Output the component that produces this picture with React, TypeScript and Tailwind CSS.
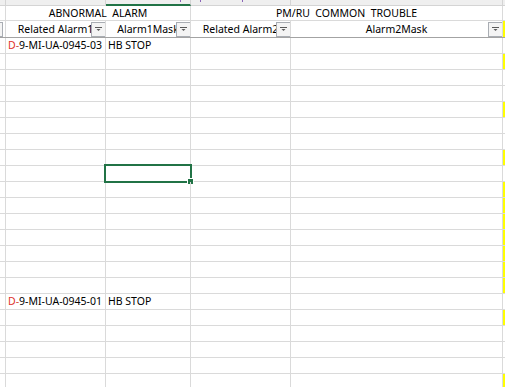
import type { ReactNode } from 'react';

// column widths include the 1px right gridline
const COLS = ['w-[6px]', 'w-[100px]', 'w-[85px]', 'w-[100px]', 'w-[212px]'];

const yellowRows = new Set([1, 4, 7, 9, 10, 11, 12, 13, 14, 15, 17, 21]);

type DataRow = { id?: string; mask?: string };

const rows: DataRow[] = Array.from({ length: 22 }, () => ({}));
rows[0] = { id: '9-MI-UA-0945-03', mask: 'HB STOP' };
rows[16] = { id: '9-MI-UA-0945-01', mask: 'HB STOP' };

function FilterButton() {
  return (
    <div className="absolute right-[-1px] top-[1px] w-[15px] h-[15px] border border-[#a9adb3] bg-[#f4f4f4] flex items-center justify-center">
      <svg width="7" height="5" viewBox="0 0 7 5">
        <rect x="0" y="0" width="7" height="1" fill="#5a5a5a" />
        <polygon points="1.5,2 5.5,2 3.5,4" fill="#5a5a5a" />
      </svg>
    </div>
  );
}

function FilterCell({ width, label }: { width: string; label: string }) {
  return (
    <div className={`${width} relative h-full border-r border-[#dadada] overflow-hidden`}>
      <div className="absolute inset-0 flex items-center justify-center whitespace-nowrap">{label}</div>
      <FilterButton />
    </div>
  );
}

function Cell({ width, children }: { width: string; children?: ReactNode }) {
  return (
    <div className={`${width} h-full border-r border-[#dadada] flex items-center pl-[2px] whitespace-nowrap overflow-visible`}>
      {children}
    </div>
  );
}

export default function App() {
  return (
    <div
      className="w-[505px] h-[387px] overflow-hidden bg-white text-[10.5px] text-black leading-none"
      style={{ fontFamily: "'Noto Sans', 'Noto Sans CJK KR', sans-serif" }}
    >
      {/* column letter strip, mostly scrolled off */}
      <div className="flex h-[6px] bg-[#efefef]">
        <div className={`${COLS[0]} border-r border-b border-[#d4d4d4]`} />
        <div className={`${COLS[1]} border-r border-b border-[#d4d4d4]`} />
        <div className={`${COLS[2]} relative border-r border-[#d4d4d4] border-b-2 border-b-[#217346]`}>
          <div className="absolute left-[74px] top-0 w-px h-[2px] bg-[#8a64b8]" />
        </div>
        <div className={`${COLS[3]} relative border-r border-b border-[#d4d4d4]`}>
          <div className="absolute left-[9px] top-0 w-px h-[2px] bg-[#8a64b8]" />
          <div className="absolute left-[51px] top-0 w-px h-[2px] bg-[#8a64b8]" />
        </div>
        <div className={`${COLS[4]} border-r border-b border-[#d4d4d4]`} />
        <div className="flex-1 border-b border-[#d4d4d4]" />
      </div>

      {/* group titles */}
      <div className="flex h-[15px] border-b border-[#dadada]">
        <div className={`${COLS[0]} border-r border-[#dadada]`} />
        <div className="w-[185px] border-r border-[#dadada] flex items-center justify-center whitespace-nowrap">
          ABNORMAL&nbsp; ALARM
        </div>
        <div className="w-[312px] border-r border-[#dadada] flex items-center justify-center whitespace-nowrap">
          PM/RU&nbsp; COMMON&nbsp; TROUBLE
        </div>
        <div className="flex-1" />
      </div>

      {/* autofilter header */}
      <div className="flex h-[17px] border-b border-[#a3a3a3]">
        <div className={`${COLS[0]} relative h-full border-r border-[#dadada]`}>
          <div className="absolute left-[-12px] top-[1px] w-[15px] h-[15px] border border-[#a9adb3] bg-[#f4f4f4]" />
        </div>
        <FilterCell width={COLS[1]} label="Related  Alarm1" />
        <FilterCell width={COLS[2]} label="Alarm1Mask" />
        <FilterCell width={COLS[3]} label="Related  Alarm2" />
        <FilterCell width={COLS[4]} label="Alarm2Mask" />
        <div className="flex-1 bg-[#ffff00]" />
      </div>

      {rows.map((r, i) => (
        <div key={i} className="flex h-[16px] border-b border-[#dadada]">
          <Cell width={COLS[0]} />
          <Cell width={COLS[1]}>
            {r.id && (
              <span>
                <span className="text-[#e0322c]">D</span>
                <span className="text-[#d0503a]">-</span>
                {r.id}
              </span>
            )}
          </Cell>
          <div className={`${COLS[2]} relative h-full border-r border-[#dadada] flex items-center pl-[2px] whitespace-nowrap`}>
            {r.mask}
            {i === 8 && (
              <div className="absolute left-[-2px] top-[-2px] w-[88px] h-[19px] border-2 border-[#217346]">
                <div className="absolute right-[-4px] bottom-[-4px] w-[7px] h-[7px] bg-white flex items-center justify-center">
                  <div className="w-[5px] h-[5px] bg-[#217346]" />
                </div>
              </div>
            )}
          </div>
          <Cell width={COLS[3]} />
          <Cell width={COLS[4]} />
          <div className={`flex-1 ${yellowRows.has(i) ? 'bg-[#ffff00]' : ''}`} />
        </div>
      ))}
    </div>
  );
}
